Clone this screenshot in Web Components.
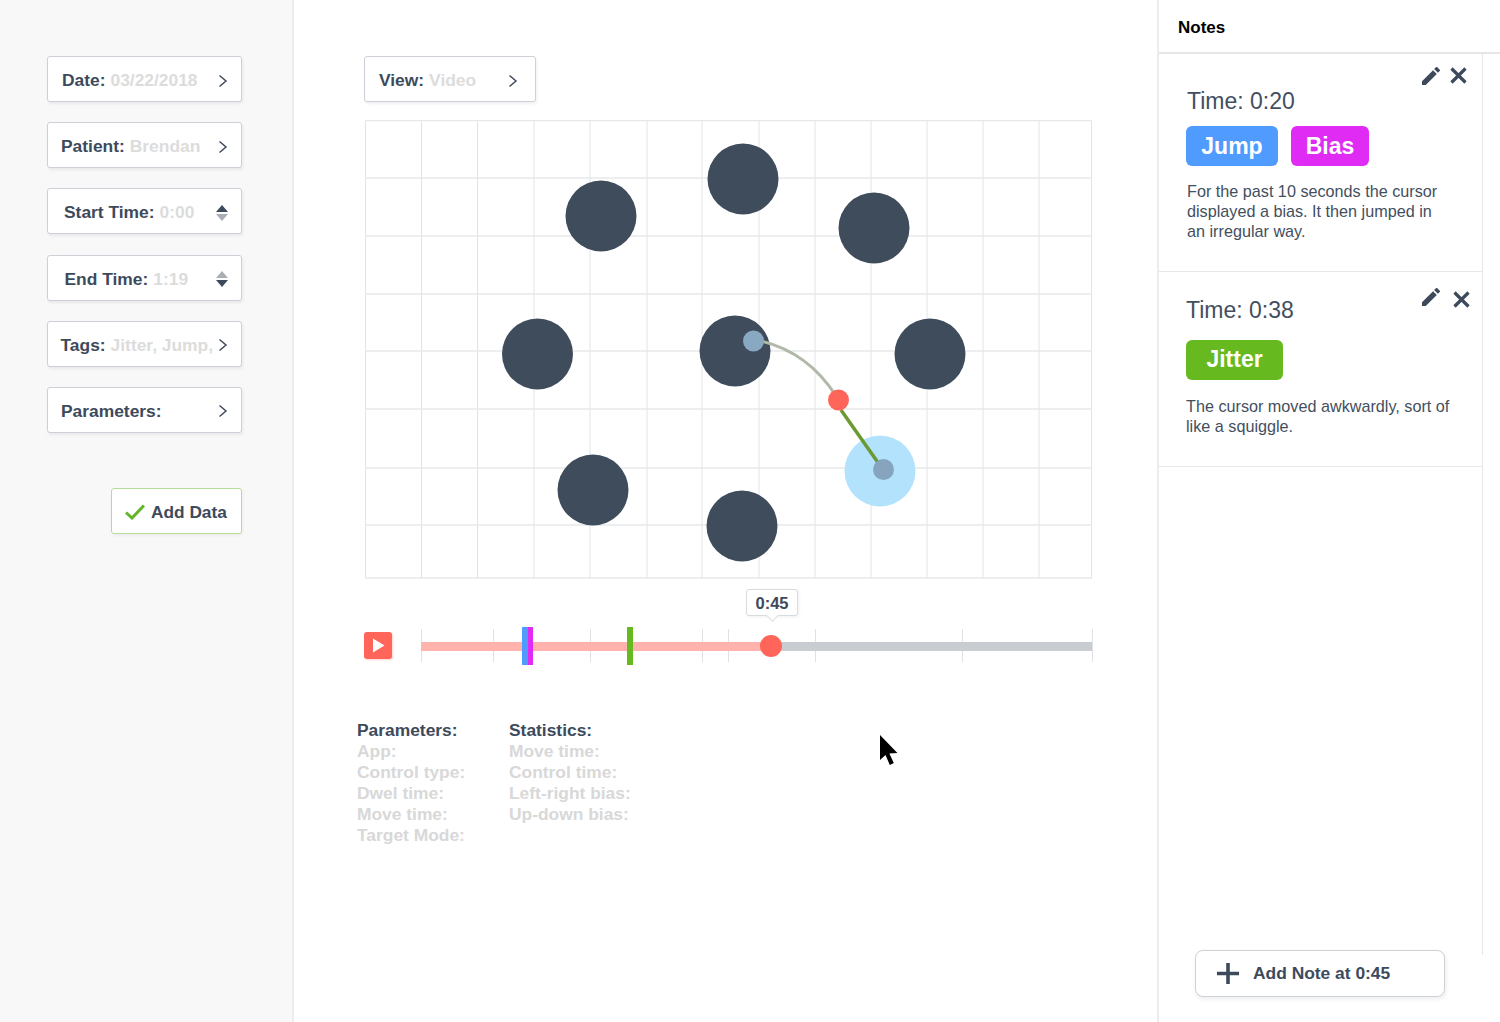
<!DOCTYPE html>
<html lang="en">
<head>
<meta charset="utf-8">
<title>Notes</title>
<style>
  html, body {
    margin: 0;
    height: 100%;
    background: #fff;
    font-family: "Liberation Sans", Arial, sans-serif;
    color: #3d4a5c;
    overflow: hidden;
  }
</style>
</head>
<body>
<app-shell>
  <filter-panel slot="left">
    <filter-button style="--inset:14px">Date:<span slot="value">03/22/2018</span></filter-button>
    <filter-button style="--inset:13px">Patient:<span slot="value">Brendan</span></filter-button>
    <filter-button icon="stepper-up" style="--inset:16px">Start Time:<span slot="value">0:00</span></filter-button>
    <filter-button icon="stepper-down" style="--inset:16.500px">End Time:<span slot="value">1:19</span></filter-button>
    <filter-button style="--inset:12.500px">Tags:<span slot="value">Jitter, Jump,</span></filter-button>
    <filter-button style="--inset:13px">Parameters:</filter-button>
    <add-data-button>Add Data</add-data-button>
  </filter-panel>

  <main-view slot="main">
    <filter-button style="--inset:14px;--right:17px;width:172px;margin-left:70px">View:<span slot="value">Video</span></filter-button>
    <target-canvas></target-canvas>
    <time-line></time-line>
    <info-table></info-table>
  </main-view>

  <notes-panel slot="right" footer="Add Note at 0:45">
    <note-card time="0:20" style="--h:218px;--x:28px;--tag-x:-1px;--icon-gap:10px;--icon-right:15px;--icon-top:13px;--close-y:0px;--time-gap:0px;--tag-gap:10px;--text-gap:15px">
      <tag-chip slot="tags" style="--bg:#4f9bff;--w:92px">Jump</tag-chip>
      <tag-chip slot="tags" style="--bg:#e02bf5;--w:78px">Bias</tag-chip>
      For the past 10 seconds the cursor displayed a bias. It then jumped in an irregular way.
    </note-card>
    <note-card time="0:38" style="--h:195px;--x:27px;--tag-x:0px;--icon-gap:13px;--icon-right:12px;--icon-top:16px;--close-y:3px;--time-gap:-12px;--tag-gap:14.500px;--text-gap:16.500px">
      <tag-chip slot="tags" style="--bg:#66ba1f;--w:97px">Jitter</tag-chip>
      The cursor moved awkwardly, sort of like a squiggle.
    </note-card>
  </notes-panel>
</app-shell>

<script>
class AppShell extends HTMLElement {
  constructor() {
    super();
    this.attachShadow({ mode: 'open' }).innerHTML = `
      <style>
        :host { display: grid; grid-template-columns: 294px 863px 343px; height: 1022px; }
      </style>
      <slot name="left"></slot>
      <slot name="main"></slot>
      <slot name="right"></slot>`;
  }
}

class FilterPanel extends HTMLElement {
  constructor() {
    super();
    this.attachShadow({ mode: 'open' }).innerHTML = `
      <style>
        :host {
          display: flex;
          flex-direction: column;
          gap: 20.2px;
          box-sizing: border-box;
          height: 1022px;
          padding: 56px 50px 0 47px;
          background: #f8f8f8;
          border-right: 2px solid #ececec;
        }
      </style>
      <slot></slot>`;
  }
}

class FilterButton extends HTMLElement {
  constructor() {
    super();
    this.attachShadow({ mode: 'open' });
  }

  connectedCallback() {
    const icon = this.getAttribute('icon');
    let glyph = '<svg width="10" height="14" viewBox="0 0 10 14"><path d="M1.5 1.5 8 7l-6.5 5.5" fill="none" stroke="#3e4a5a" stroke-width="1.5"/></svg>';
    if (icon) {
      const up = icon === 'stepper-up' ? '#3d4a5c' : '#a9aeb5';
      const down = icon === 'stepper-up' ? '#a9aeb5' : '#3d4a5c';
      glyph = `<svg width="12" height="16" viewBox="0 0 12 16"><path d="M6 0l6 7H0z" fill="${up}"/><path d="M6 16l6-7H0z" fill="${down}"/></svg>`;
    }
    this.shadowRoot.innerHTML = `
      <style>
        :host {
          display: flex;
          align-items: center;
          box-sizing: border-box;
          height: 46px;
          padding: 3px var(--right, 13px) 0 var(--inset, 14px);
          background: #fff;
          border: 1px solid #cdd0d6;
          border-radius: 3px;
          box-shadow: 1px 2px 3px rgba(60, 70, 90, 0.08);
          font: bold 17.400px "Liberation Sans", Arial, sans-serif;
          color: #3d4a5c;
          white-space: nowrap;
        }
        .value { margin-left: 5px; color: #dcdcdc; }
        svg { margin-left: auto; flex: none; }
      </style>
      <slot></slot><span class="value"><slot name="value"></slot></span>${glyph}`;
  }
}

class AddDataButton extends HTMLElement {
  constructor() {
    super();
    this.attachShadow({ mode: 'open' }).innerHTML = `
      <style>
        :host {
          display: flex;
          align-items: center;
          gap: 6px;
          box-sizing: border-box;
          width: 131px;
          height: 46px;
          margin: 35px 0 0 64px;
          padding: 2px 0 0 13px;
          background: #fff;
          border: 1px solid #b6dc9b;
          border-radius: 3px;
          box-shadow: 1px 2px 3px rgba(60, 70, 90, 0.06);
          font: bold 17.300px "Liberation Sans", Arial, sans-serif;
          color: #3d4a5c;
        }
      </style>
      <svg width="20" height="16" viewBox="0 0 20 16"><path d="M1 8.5 7 14 19 1.5" fill="none" stroke="#62b526" stroke-width="3"/></svg>
      <slot></slot>`;
  }
}

class MainView extends HTMLElement {
  constructor() {
    super();
    this.attachShadow({ mode: 'open' }).innerHTML = `
      <style>
        :host { display: flex; flex-direction: column; position: relative; box-sizing: border-box; height: 1022px; padding-top: 56px; }
        .cursor { position: absolute; left: 585px; top: 734px; }
      </style>
      <slot></slot>
      <svg class="cursor" width="20" height="32" viewBox="0 0 20 32">
        <path d="M1 1v25l5.5-5 4.3 10 4-2-4.4-9.400 8-.6z" fill="#000"/>
      </svg>`;
  }
}

class TargetCanvas extends HTMLElement {
  constructor() {
    super();
    const xs = [0.5, 56.5, 112.5, 169, 225, 282, 337, 394, 450, 506, 562, 618, 674, 726.5];
    const ys = [0.5, 58, 116, 174, 231, 289, 348, 405, 458];
    const targets = [[236, 96], [378, 59], [509, 108], [172.500, 234], [370, 231], [565, 234], [228, 370], [377, 406]];
    const vertical = xs.map((x) => `<path d="M${x} 0V459" stroke="#e0e4e9"/>`).join('');
    const horizontal = ys.map((y) => `<path d="M0 ${y}H727" stroke="#e6e8eb" stroke-width="1.500"/>`).join('');
    const circles = targets.map(([x, y]) => `<circle cx="${x}" cy="${y}" r="35.500" fill="#3e4c5c"/>`).join('');
    this.attachShadow({ mode: 'open' }).innerHTML = `
      <style>
        :host { display: block; width: 727px; height: 459px; margin: 18px 0 0 71px; }
        svg { display: block; }
      </style>
      <svg width="727" height="459" viewBox="0 0 727 459">
        ${vertical}${horizontal}${circles}
        <circle cx="515" cy="351" r="35.500" fill="#b3e2fd"/>
        <path d="M396 221C425 228 452 246 471 276" fill="none" stroke="#b1b9a9" stroke-width="3"/>
        <path d="M476 290 514 344" fill="none" stroke="#6b9a32" stroke-width="3.500"/>
        <circle cx="388.500" cy="221" r="10.500" fill="#89a8c2"/>
        <circle cx="518.500" cy="349.500" r="10.500" fill="#86a4bd"/>
        <circle cx="473.500" cy="280" r="10.500" fill="#ff6558"/>
      </svg>`;
  }
}

class TimeLine extends HTMLElement {
  constructor() {
    super();
    const ticks = [0, 72, 168.500, 281, 307, 394, 541, 670.500];
    const marks = ticks.map((x) => `<i class="tick" style="left:${x}px"></i>`).join('');
    this.attachShadow({ mode: 'open' }).innerHTML = `
      <style>
        :host { display: flex; height: 86px; margin: 10px 0 0 70px; }
        .play {
          display: flex;
          align-items: center;
          justify-content: center;
          width: 28px;
          height: 27px;
          margin: 43px 29px 0 0;
          background: #ff6558;
          border-radius: 3px;
          box-shadow: 1px 1px 2px rgba(255, 101, 88, 0.3);
        }
        .track { position: relative; width: 671px; height: 76px; }
        .bar { position: relative; z-index: 1; display: flex; height: 8.500px; margin-top: 53px; background: #c9ccd1; }
        .done { width: 349px; background: #ffb3ac; }
        .tick { position: absolute; top: 40px; width: 1px; height: 33px; background: #dfe1e5; }
        .flag { position: absolute; z-index: 2; top: 38px; height: 38px; }
        .thumb { position: absolute; z-index: 2; left: 338.500px; top: 46px; width: 22px; height: 22px; border-radius: 50%; background: #ff6558; }
        .tip {
          position: absolute;
          left: 325px;
          top: 0;
          box-sizing: border-box;
          width: 52px;
          height: 27px;
          text-align: center;
          font: bold 16.500px/26px "Liberation Sans", Arial, sans-serif;
          color: #3d4a5c;
          background: #fff;
          border: 1px solid #d8dbe0;
          border-radius: 3px;
          box-shadow: 1px 1px 3px rgba(60, 70, 90, 0.08);
        }
        .tip::after {
          content: "";
          position: absolute;
          left: 21px;
          bottom: -5px;
          width: 8px;
          height: 8px;
          background: #fff;
          border-right: 1px solid #d8dbe0;
          border-bottom: 1px solid #d8dbe0;
          transform: rotate(45deg);
        }
      </style>
      <div class="play">
        <svg width="13" height="15" viewBox="0 0 13 15"><path d="M1 0.500 12.500 7.500 1 14.500z" fill="#fff"/></svg>
      </div>
      <div class="track">
        <div class="bar"><div class="done"></div></div>
        ${marks}
        <i class="flag" style="left:101px;width:5.500px;background:#4f9bff"></i>
        <i class="flag" style="left:106.500px;width:5.500px;background:#e02bf5"></i>
        <i class="flag" style="left:206px;width:6px;background:#66ba1f"></i>
        <div class="thumb"></div>
        <div class="tip">0:45</div>
      </div>`;
  }
}

class InfoTable extends HTMLElement {
  constructor() {
    super();
    this.attachShadow({ mode: 'open' }).innerHTML = `
      <style>
        :host {
          display: grid;
          grid-template-columns: 152px auto;
          justify-content: start;
          margin: 45px 0 0 63px;
          font: bold 17.400px/21px "Liberation Sans", Arial, sans-serif;
          color: #d8d8d8;
        }
        h4 { margin: 0; font: inherit; color: #3d4a5c; }
        div { white-space: nowrap; }
      </style>
      <div>
        <h4>Parameters:</h4>
        App:<br>Control type:<br>Dwel time:<br>Move time:<br>Target Mode:
      </div>
      <div>
        <h4>Statistics:</h4>
        Move time:<br>Control time:<br>Left-right bias:<br>Up-down bias:
      </div>`;
  }
}

class NotesPanel extends HTMLElement {
  constructor() {
    super();
    this.attachShadow({ mode: 'open' });
  }

  connectedCallback() {
    this.shadowRoot.innerHTML = `
      <style>
        :host {
          display: flex;
          flex-direction: column;
          box-sizing: border-box;
          height: 1022px;
          border-left: 2px solid #ececec;
          font-family: "Liberation Sans", Arial, sans-serif;
        }
        header {
          box-sizing: border-box;
          height: 54px;
          padding: 18px 0 0 19px;
          border-bottom: 2px solid #e6e6e6;
          font: bold 17px/20px "Liberation Sans", Arial, sans-serif;
          color: #000;
        }
        .list { height: 901px; width: 324px; box-sizing: border-box; border-right: 1px solid #e6e6e6; }
        footer { padding: 0 0 0 36px; margin-top: -5px; }
        button {
          display: flex;
          align-items: center;
          gap: 14px;
          box-sizing: border-box;
          width: 250px;
          height: 47px;
          padding: 0 0 0 21px;
          background: #fff;
          border: 1px solid #ced1d6;
          border-radius: 8px;
          box-shadow: 1px 2px 4px rgba(60, 70, 90, 0.1);
          font: bold 17.400px "Liberation Sans", Arial, sans-serif;
          color: #3d4a5c;
        }
      </style>
      <header>Notes</header>
      <div class="list"><slot></slot></div>
      <footer>
        <button>
          <svg width="22" height="22" viewBox="0 0 22 22"><path d="M11 0V21M0 10.500H22" stroke="#3d4a5c" stroke-width="3.600" fill="none"/></svg>
          ${this.getAttribute('footer')}
        </button>
      </footer>`;
  }
}

class NoteCard extends HTMLElement {
  constructor() {
    super();
    this.attachShadow({ mode: 'open' });
  }

  connectedCallback() {
    this.shadowRoot.innerHTML = `
      <style>
        :host {
          display: block;
          box-sizing: border-box;
          height: var(--h);
          padding: var(--icon-top) 0 0 var(--x);
          border-bottom: 1px solid #e6e9ec;
          color: #434f5e;
          font-family: "Liberation Sans", Arial, sans-serif;
        }
        .icons {
          display: flex;
          align-items: flex-start;
          justify-content: flex-end;
          gap: var(--icon-gap);
          height: 19px;
          padding-right: var(--icon-right);
        }
        .close { margin-top: var(--close-y); }
        .time { margin: var(--time-gap) 0 0 0; font-size: 23px; line-height: 30px; }
        .tags { display: flex; gap: 13px; margin: var(--tag-gap) 0 0 var(--tag-x); }
        .text { margin: var(--text-gap) 0 0 0; max-width: 265px; font-size: 16.200px; line-height: 20px; }
        svg { display: block; flex: none; }
      </style>
      <div class="icons">
        <svg width="18" height="18" viewBox="3 3 18 18"><path fill="#3d4a5c" d="M3 17.250V21h3.750L17.810 9.940l-3.750-3.750L3 17.250zM20.710 7.040a1 1 0 0 0 0-1.410l-2.340-2.340a1 1 0 0 0-1.410 0l-1.830 1.830 3.750 3.750 1.830-1.830z"/></svg>
        <svg class="close" width="17" height="17" viewBox="0 0 17 17"><path d="M1.500 1.500l14 14M15.500 1.500l-14 14" stroke="#3d4a5c" stroke-width="3.200" fill="none"/></svg>
      </div>
      <div class="time">Time: ${this.getAttribute('time')}</div>
      <div class="tags"><slot name="tags"></slot></div>
      <div class="text"><slot></slot></div>`;
  }
}

class TagChip extends HTMLElement {
  constructor() {
    super();
    this.attachShadow({ mode: 'open' }).innerHTML = `
      <style>
        :host {
          display: flex;
          align-items: center;
          justify-content: center;
          width: var(--w);
          height: 40px;
          background: var(--bg);
          border-radius: 6px;
          font: bold 23px "Liberation Sans", Arial, sans-serif;
          color: #fff;
        }
      </style>
      <slot></slot>`;
  }
}

customElements.define('app-shell', AppShell);
customElements.define('filter-panel', FilterPanel);
customElements.define('filter-button', FilterButton);
customElements.define('add-data-button', AddDataButton);
customElements.define('main-view', MainView);
customElements.define('target-canvas', TargetCanvas);
customElements.define('time-line', TimeLine);
customElements.define('info-table', InfoTable);
customElements.define('notes-panel', NotesPanel);
customElements.define('note-card', NoteCard);
customElements.define('tag-chip', TagChip);
</script>
</body>
</html>
